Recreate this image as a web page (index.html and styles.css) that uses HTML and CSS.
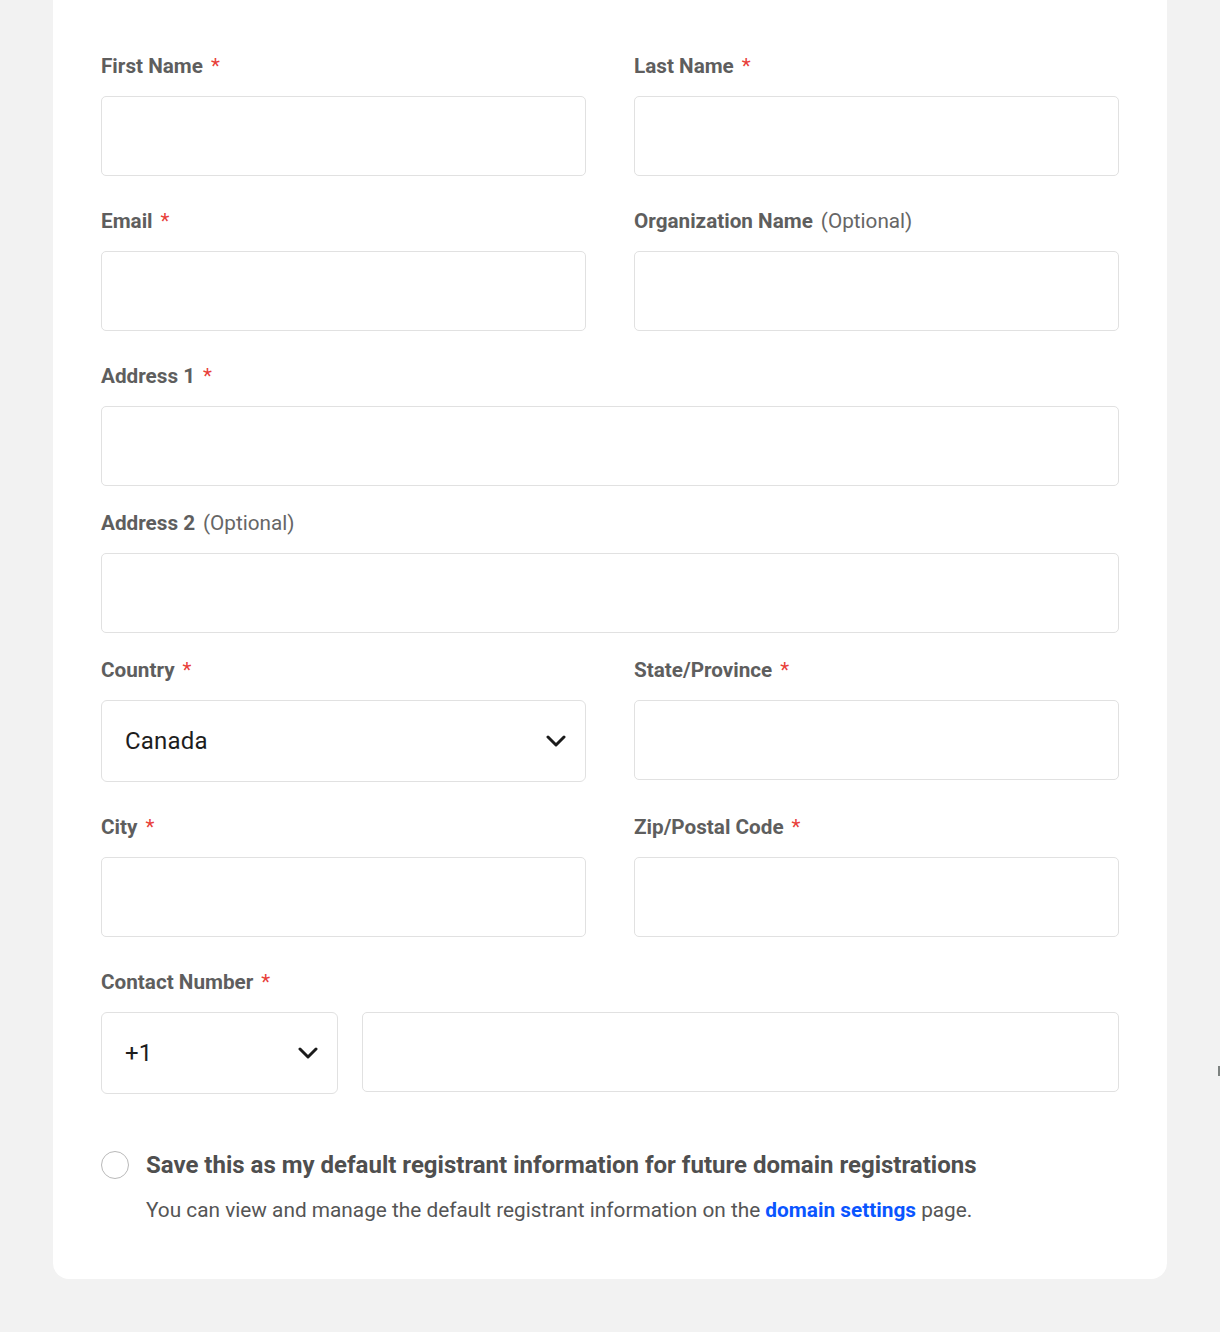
FILE: index.html
```html
<!DOCTYPE html>
<html lang="en">
<head>
<meta charset="utf-8">
<title>Registrant information</title>
<link rel="stylesheet" href="styles.css">
</head>
<body>
<div class="card">
  <form class="form">
    <div class="row two">
      <div class="field">
        <label class="label">First Name<span class="req">*</span></label>
        <div class="input"></div>
      </div>
      <div class="field">
        <label class="label">Last Name<span class="req">*</span></label>
        <div class="input"></div>
      </div>
    </div>
    <div class="row two">
      <div class="field">
        <label class="label">Email<span class="req">*</span></label>
        <div class="input"></div>
      </div>
      <div class="field">
        <label class="label">Organization Name<span class="opt">(Optional)</span></label>
        <div class="input"></div>
      </div>
    </div>
    <div class="row tight">
      <div class="field">
        <label class="label">Address 1<span class="req">*</span></label>
        <div class="input"></div>
      </div>
    </div>
    <div class="row tight">
      <div class="field">
        <label class="label">Address 2<span class="opt">(Optional)</span></label>
        <div class="input"></div>
      </div>
    </div>
    <div class="row two">
      <div class="field">
        <label class="label">Country<span class="req">*</span></label>
        <div class="select"><span class="value">Canada</span>
          <svg class="chev" viewBox="0 0 20 12" width="20" height="12"><path d="M2 2l8 8 8-8" fill="none" stroke="#1b1b1b" stroke-width="3" stroke-linecap="round" stroke-linejoin="round"/></svg>
        </div>
      </div>
      <div class="field">
        <label class="label">State/Province<span class="req">*</span></label>
        <div class="input"></div>
      </div>
    </div>
    <div class="row two">
      <div class="field">
        <label class="label">City<span class="req">*</span></label>
        <div class="input"></div>
      </div>
      <div class="field">
        <label class="label">Zip/Postal Code<span class="req">*</span></label>
        <div class="input"></div>
      </div>
    </div>
    <div class="row">
      <div class="field">
        <label class="label">Contact Number<span class="req">*</span></label>
        <div class="phone">
          <div class="select code"><span class="value">+1</span>
            <svg class="chev" viewBox="0 0 20 12" width="20" height="12"><path d="M2 2l8 8 8-8" fill="none" stroke="#1b1b1b" stroke-width="3" stroke-linecap="round" stroke-linejoin="round"/></svg>
          </div>
          <div class="input grow"></div>
        </div>
      </div>
    </div>
    <div class="consent">
      <span class="radio"></span>
      <div class="consent-text">
        <div class="consent-title">Save this as my default registrant information for future domain registrations</div>
        <div class="consent-sub">You can view and manage the default registrant information on the <a class="link" href="#">domain settings</a> page.</div>
      </div>
    </div>
  </form>
</div>
<span class="edge-mark"></span>
</body>
</html>
```

FILE: styles.css
```css
html, body {
  margin: 0;
  padding: 0;
}
body {
  background: #f2f2f2;
  font-family: Roboto, "Liberation Sans", Arial, sans-serif;
  min-height: 1332px;
  position: relative;
}
.card {
  margin-left: 53px;
  width: 1114px;
  box-sizing: border-box;
  background: #ffffff;
  border-radius: 0 0 16px 16px;
  padding: 54px 48px 57px;
}
.form {
  display: flex;
  flex-direction: column;
}
.row {
  display: grid;
  grid-template-columns: 1fr;
  column-gap: 48px;
  margin-bottom: 33px;
}
.row.two {
  grid-template-columns: 1fr 1fr;
}
.row.tight {
  margin-bottom: 25px;
}
.field {
  display: flex;
  flex-direction: column;
  gap: 18px;
}
.label {
  font-size: 20.7px;
  line-height: 24px;
  font-weight: 700;
  color: #5e5e5e;
  display: flex;
  align-items: baseline;
}
.req {
  color: #e8403a;
  font-weight: 400;
  margin-left: 8px;
}
.opt {
  font-weight: 400;
  color: #666666;
  margin-left: 8px;
}
.input {
  height: 80px;
  box-sizing: border-box;
  border: 1px solid #e1e1e1;
  border-radius: 5px;
  background: #fff;
}
.select {
  height: 82px;
  box-sizing: border-box;
  border: 1px solid #e1e1e1;
  border-radius: 6px;
  background: #fff;
  display: flex;
  align-items: center;
  justify-content: space-between;
  padding: 0 19px 0 23px;
}
.value {
  font-size: 24px;
  color: #1d1d1d;
  letter-spacing: 0.2px;
}
.chev {
  display: block;
}
.phone {
  display: flex;
  gap: 24px;
  align-items: flex-start;
}
.select.code {
  width: 237px;
  flex: none;
  padding-right: 19px;
}
.grow {
  flex: 1;
}
.consent {
  display: grid;
  grid-template-columns: 28px 1fr;
  column-gap: 17px;
  margin-top: 24px;
}
.radio {
  width: 28px;
  height: 28px;
  box-sizing: border-box;
  border: 1px solid #b9b9b9;
  border-radius: 50%;
}
.consent-title {
  font-size: 24px;
  line-height: 28px;
  font-weight: 700;
  color: #4f4f4f;
  white-space: nowrap;
}
.consent-sub {
  margin-top: 19px;
  font-size: 20.8px;
  line-height: 24px;
  color: #555555;
  white-space: nowrap;
}
.link {
  color: #0a55ff;
  font-weight: 700;
  text-decoration: none;
}
.edge-mark {
  position: absolute;
  left: 1218px;
  top: 1066px;
  width: 2px;
  height: 10px;
  background: #7d8280;
}
```
